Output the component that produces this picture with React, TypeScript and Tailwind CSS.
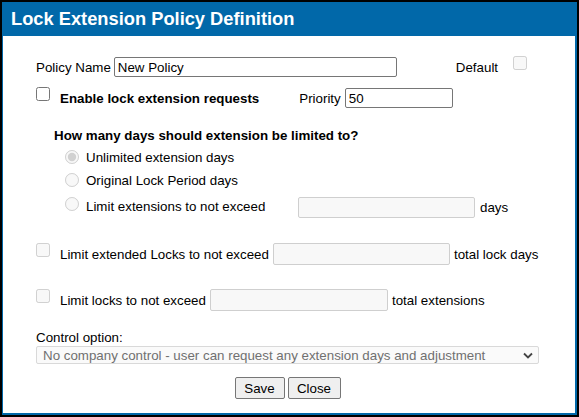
import React from "react";

const font = { fontFamily: '"Liberation Sans", Arial, sans-serif' };

function Check({ disabled, className = "" }: { disabled?: boolean; className?: string }) {
  return <input type="checkbox" disabled={disabled} className={`m-0 w-[14px] h-[14px] shrink-0 ${className}`} />;
}

function Radio({ checked, className = "" }: { checked?: boolean; className?: string }) {
  return (
    <input
      type="radio"
      name="days"
      disabled
      defaultChecked={checked}
      className={`m-0 w-[14px] h-[14px] shrink-0 ${className}`}
    />
  );
}

function TextBox({ value, disabled, className = "" }: { value?: string; disabled?: boolean; className?: string }) {
  const look = disabled
    ? "border-[#cfcfcf] bg-[#f8f8f8]"
    : "border-[#767676] bg-white";
  return (
    <input
      type="text"
      defaultValue={value}
      disabled={disabled}
      className={`h-[20px] border rounded-[2px] px-[3px] text-[13.33px] text-black outline-none ${look} ${className}`}
      style={font}
    />
  );
}

export default function App() {
  return (
    <div className="w-[579px] h-[417px] bg-black p-[2px]" style={font}>
      <div className="h-full bg-white border-l border-r-2 border-b-2 border-[#0168a9] flex flex-col">
        <div className="h-[34px] bg-[#0168a9] flex items-center pl-[8px] shrink-0">
          <h1 className="text-[18.3px] font-bold text-white leading-none">Lock Extension Policy Definition</h1>
        </div>

        <div className="pl-[33px] pr-[36px] text-[13.33px] text-black leading-[15px]">
          <div className="mt-[21px] flex items-center h-[20px]">
            <span>Policy Name</span>
            <TextBox value="New Policy" className="ml-[3px] w-[283px]" />
            <span className="ml-[59px]">Default</span>
            <Check disabled className="ml-[15px] self-start -mt-[1px]" />
          </div>

          <div className="mt-[11px] flex items-center h-[20px]">
            <Check className="self-start -mt-[1px]" />
            <span className="ml-[10px] font-bold">Enable lock extension requests</span>
            <span className="ml-[40px]">Priority</span>
            <TextBox value="50" className="ml-[4px] w-[108px]" />
          </div>

          <div className="mt-[20px] ml-[18px] font-bold">How many days should extension be limited to?</div>

          <div className="ml-[29px]">
            <div className="mt-[4px] flex items-center h-[20px]">
              <Radio checked />
              <span className="ml-[7px]">Unlimited extension days</span>
            </div>
            <div className="mt-[3px] flex items-center h-[20px]">
              <Radio />
              <span className="ml-[7px]">Original Lock Period days</span>
            </div>
            <div className="mt-[7px] flex items-start h-[21px]">
              <Radio />
              <span className="ml-[7px] w-[212px] mt-[2px]">Limit extensions to not exceed</span>
              <TextBox disabled className="w-[177px] h-[21px]" />
              <span className="ml-[5px] mt-[3px]">days</span>
            </div>
          </div>

          <div className="mt-[25px] flex items-center h-[22px]">
            <Check disabled className="self-start" />
            <span className="ml-[10px] mt-[1px]">Limit extended Locks to not exceed</span>
            <TextBox disabled className="ml-[4px] w-[177px] h-[22px]" />
            <span className="ml-[4px] mt-[1px]">total lock days</span>
          </div>

          <div className="mt-[24px] flex items-center h-[22px]">
            <Check disabled className="self-start" />
            <span className="ml-[10px] mt-[1px]">Limit locks to not exceed</span>
            <TextBox disabled className="ml-[4px] w-[178px] h-[22px]" />
            <span className="ml-[4px] mt-[1px]">total extensions</span>
          </div>

          <div className="mt-[19px]">Control option:</div>
          <div className="mt-[1px] h-[18px] border border-[#d9d9d9] bg-[#fafafa] rounded-[2px] flex items-center justify-between pl-[6px] pr-[5px] text-[#707070]">
            <span>No company control - user can request any extension days and adjustment</span>
            <svg width="10" height="7" viewBox="0 0 10 7" fill="none">
              <path d="M1 1.5 L5 5.5 L9 1.5" stroke="#444" strokeWidth="1.8" />
            </svg>
          </div>

          <div className="mt-[13px] flex justify-center gap-[3px]">
            <button className="h-[22px] w-[50px] bg-[#efefef] border border-[#767676] rounded-[2px] text-[13.33px] text-black">
              Save
            </button>
            <button className="h-[22px] w-[53px] bg-[#efefef] border border-[#767676] rounded-[2px] text-[13.33px] text-black">
              Close
            </button>
          </div>
        </div>
      </div>
    </div>
  );
}
